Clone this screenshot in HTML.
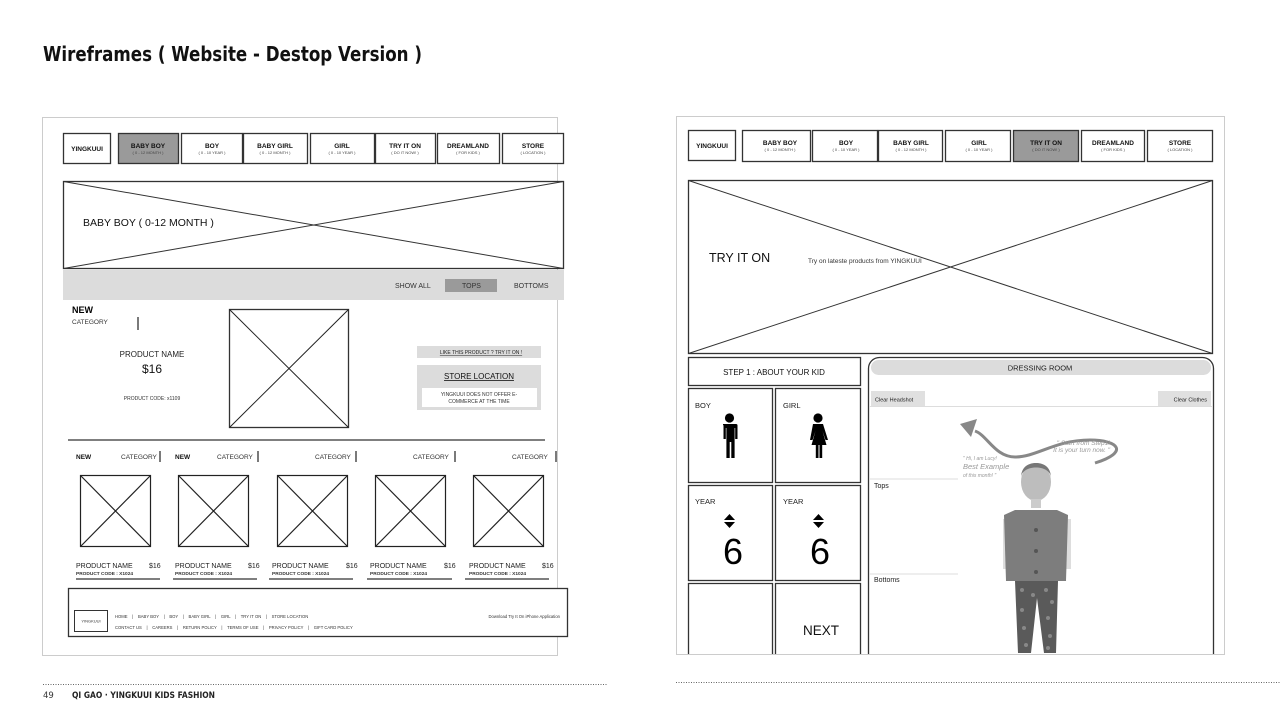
<!DOCTYPE html>
<html><head><meta charset="utf-8"><style>
html,body{margin:0;padding:0;background:#fff;width:1280px;height:720px;overflow:hidden}
svg{display:block;font-family:"Liberation Sans","DejaVu Sans",sans-serif}
.pre{white-space:pre}
</style></head><body>
<svg width="1280" height="720" viewBox="0 0 1280 720" xmlns="http://www.w3.org/2000/svg">
<text x="43" y="61" font-size="20" font-weight="bold" font-family="DejaVu Sans, sans-serif" fill="#111" textLength="379" lengthAdjust="spacingAndGlyphs">Wireframes ( Website - Destop Version )</text>

<!-- LEFT PANEL -->
<rect x="42.5" y="117.5" width="515" height="538" fill="#fff" stroke="#ccc"/>
<g stroke="#333" stroke-width="1.3" fill="#fff">
<rect x="63.5" y="133.5" width="47" height="30"/>
<rect x="118.5" y="133.5" width="60" height="30" fill="#9a9a9a"/>
<rect x="181.5" y="133.5" width="61" height="30"/>
<rect x="243.5" y="133.5" width="64" height="30"/>
<rect x="310.5" y="133.5" width="64" height="30"/>
<rect x="375.5" y="133.5" width="60" height="30"/>
<rect x="437.5" y="133.5" width="62" height="30"/>
<rect x="502.5" y="133.5" width="61" height="30"/>
</g>
<g font-size="6.5" font-weight="bold" text-anchor="middle" fill="#111">
<text x="87" y="151">YINGKUUI</text>
<text x="148" y="148">BABY BOY</text><text x="212" y="148">BOY</text><text x="275" y="148">BABY GIRL</text><text x="342" y="148">GIRL</text><text x="405" y="148">TRY IT ON</text><text x="468" y="148">DREAMLAND</text><text x="533" y="148">STORE</text>
</g>
<g font-size="4" text-anchor="middle" fill="#444">
<text x="148" y="154">( 0 - 12 MONTH )</text><text x="212" y="154">( 0 - 10 YEAR )</text><text x="275" y="154">( 0 - 12 MONTH )</text><text x="342" y="154">( 0 - 10 YEAR )</text><text x="405" y="154">( DO IT NOW! )</text><text x="468" y="154">( FOR KIDS )</text><text x="533" y="154">( LOCATION )</text>
</g>
<rect x="63.5" y="181.5" width="500" height="87" fill="#fff" stroke="#333" stroke-width="1.3"/>
<path d="M63.5 181.5L563.5 268.5M563.5 181.5L63.5 268.5" stroke="#333" stroke-width="1"/>
<text x="83" y="226" font-size="10.5" fill="#111">BABY BOY ( 0-12 MONTH )</text>
<rect x="63" y="270" width="501" height="30" fill="#dcdcdc"/>
<rect x="445" y="279" width="52" height="13" fill="#9a9a9a"/>
<g font-size="7" fill="#333"><text x="395" y="288">SHOW ALL</text><text x="462" y="288">TOPS</text><text x="514" y="288">BOTTOMS</text></g>
<text x="72" y="313" font-size="9" font-weight="bold">NEW</text>
<text x="72" y="324" font-size="6.5" fill="#333">CATEGORY</text>
<line x1="138" y1="317" x2="138" y2="330" stroke="#333" stroke-width="1.3"/>
<text x="152" y="357" font-size="8" text-anchor="middle" fill="#222">PRODUCT NAME</text>
<text x="152" y="373" font-size="12" text-anchor="middle" fill="#111">$16</text>
<text x="152" y="400" font-size="5" text-anchor="middle" fill="#333">PRODUCT CODE: x1109</text>
<rect x="229.5" y="309.5" width="119" height="118" fill="#fff" stroke="#333" stroke-width="1.3"/>
<path d="M229.5 309.5L348.5 427.5M348.5 309.5L229.5 427.5" stroke="#222"/>
<rect x="417" y="346" width="124" height="12" fill="#dcdcdc"/>
<text x="481" y="354" font-size="5" text-anchor="middle" text-decoration="underline" fill="#222">LIKE THIS PRODUCT ? TRY IT ON !</text>
<rect x="417" y="365" width="124" height="45" fill="#dcdcdc"/>
<text x="479" y="379" font-size="8" text-anchor="middle" text-decoration="underline" fill="#111">STORE LOCATION</text>
<rect x="422" y="388" width="115" height="19" fill="#fff"/>
<text x="479" y="396" font-size="5" text-anchor="middle" fill="#333">YINGKUUI DOES NOT OFFER E-</text>
<text x="479" y="403" font-size="5" text-anchor="middle" fill="#333">COMMERCE AT THE TIME</text>
<line x1="68" y1="440" x2="545" y2="440" stroke="#333" stroke-width="1.3"/>
<g font-size="6.5" fill="#333">
<text x="76" y="459" font-weight="bold" fill="#111">NEW</text><text x="121" y="459">CATEGORY</text>
<text x="175" y="459" font-weight="bold" fill="#111">NEW</text><text x="217" y="459">CATEGORY</text>
<text x="315" y="459">CATEGORY</text><text x="413" y="459">CATEGORY</text><text x="512" y="459">CATEGORY</text>
</g>
<g stroke="#333" stroke-width="1.3"><line x1="160" y1="451" x2="160" y2="462"/><line x1="258" y1="451" x2="258" y2="462"/><line x1="356" y1="451" x2="356" y2="462"/><line x1="455" y1="451" x2="455" y2="462"/><line x1="556" y1="451" x2="556" y2="462"/></g>
<g stroke="#222" stroke-width="1.2" fill="#fff">
<rect x="80.5" y="475.5" width="70" height="71"/><path d="M80.5 475.5L150.5 546.5M150.5 475.5L80.5 546.5"/>
<rect x="178.5" y="475.5" width="70" height="71"/><path d="M178.5 475.5L248.5 546.5M248.5 475.5L178.5 546.5"/>
<rect x="277.5" y="475.5" width="70" height="71"/><path d="M277.5 475.5L347.5 546.5M347.5 475.5L277.5 546.5"/>
<rect x="375.5" y="475.5" width="70" height="71"/><path d="M375.5 475.5L445.5 546.5M445.5 475.5L375.5 546.5"/>
<rect x="473.5" y="475.5" width="70" height="71"/><path d="M473.5 475.5L543.5 546.5M543.5 475.5L473.5 546.5"/>
</g>
<g font-size="7" fill="#222">
<text x="76" y="568">PRODUCT NAME</text><text x="149" y="568">$16</text>
<text x="175" y="568">PRODUCT NAME</text><text x="248" y="568">$16</text>
<text x="272" y="568">PRODUCT NAME</text><text x="346" y="568">$16</text>
<text x="370" y="568">PRODUCT NAME</text><text x="444" y="568">$16</text>
<text x="469" y="568">PRODUCT NAME</text><text x="542" y="568">$16</text>
</g>
<g font-size="4.8" font-weight="bold" fill="#333">
<text x="76" y="575">PRODUCT CODE : X1024</text><text x="175" y="575">PRODUCT CODE : X1024</text><text x="272" y="575">PRODUCT CODE : X1024</text><text x="370" y="575">PRODUCT CODE : X1024</text><text x="469" y="575">PRODUCT CODE : X1024</text>
</g>
<g stroke="#333" stroke-width="1.3"><line x1="76" y1="579" x2="160" y2="579"/><line x1="173" y1="579" x2="257" y2="579"/><line x1="269" y1="579" x2="353" y2="579"/><line x1="367" y1="579" x2="452" y2="579"/><line x1="465" y1="579" x2="549" y2="579"/></g>
<rect x="68.5" y="588.5" width="499" height="48" fill="#fff" stroke="#333" stroke-width="1.3"/>
<rect x="74.5" y="610.5" width="33" height="21" fill="#fff" stroke="#333"/>
<text x="91" y="622.5" font-size="4" text-anchor="middle" fill="#333">YINGKUUI</text>
<g font-size="4.2" fill="#333">
<text class="pre" x="115" y="618">HOME    |    BABY BOY    |    BOY    |    BABY GIRL    |    GIRL    |    TRY IT ON    |    STORE LOCATION</text>
<text class="pre" x="115" y="629">CONTACT US    |    CAREERS    |    RETURN POLICY    |    TERMS OF USE    |    PRIVACY POLICY    |    GIFT CARD POLICY</text>
<text x="560" y="618" text-anchor="end">Download Try It On iPhone Application</text>
</g>

<!-- RIGHT PANEL -->
<rect x="676.5" y="116.5" width="548" height="538" fill="#fff" stroke="#ccc"/>
<g stroke="#333" stroke-width="1.3" fill="#fff">
<rect x="688.5" y="130.5" width="47" height="30"/>
<rect x="742.5" y="130.5" width="68" height="31"/>
<rect x="812.5" y="130.5" width="65" height="31"/>
<rect x="878.5" y="130.5" width="64" height="31"/>
<rect x="945.5" y="130.5" width="65" height="31"/>
<rect x="1013.5" y="130.5" width="65" height="31" fill="#9a9a9a"/>
<rect x="1081.5" y="130.5" width="63" height="31"/>
<rect x="1147.5" y="130.5" width="65" height="31"/>
</g>
<g font-size="6.5" font-weight="bold" text-anchor="middle" fill="#111">
<text x="712" y="148">YINGKUUI</text>
<text x="780" y="145">BABY BOY</text><text x="846" y="145">BOY</text><text x="911" y="145">BABY GIRL</text><text x="979" y="145">GIRL</text><text x="1046" y="145">TRY IT ON</text><text x="1113" y="145">DREAMLAND</text><text x="1180" y="145">STORE</text>
</g>
<g font-size="4" text-anchor="middle" fill="#444">
<text x="780" y="151">( 0 - 12 MONTH )</text><text x="846" y="151">( 0 - 10 YEAR )</text><text x="911" y="151">( 0 - 12 MONTH )</text><text x="979" y="151">( 0 - 10 YEAR )</text><text x="1046" y="151">( DO IT NOW! )</text><text x="1113" y="151">( FOR KIDS )</text><text x="1180" y="151">( LOCATION )</text>
</g>
<rect x="688.5" y="180.5" width="524" height="173" fill="#fff" stroke="#333" stroke-width="1.3"/>
<path d="M688.5 180.5L1212.5 353.5M1212.5 180.5L688.5 353.5" stroke="#333"/>
<text x="709" y="262" font-size="12.5" fill="#111">TRY IT ON</text>
<text x="808" y="263" font-size="6.5" fill="#333">Try on lateste products from YINGKUUI</text>

<g stroke="#333" stroke-width="1.3" fill="#fff">
<rect x="688.5" y="357.5" width="172" height="28"/>
<rect x="688.5" y="388.5" width="84" height="94"/><rect x="775.5" y="388.5" width="85" height="94"/>
<rect x="688.5" y="485.5" width="84" height="95"/><rect x="775.5" y="485.5" width="85" height="95"/>
<path d="M688.5 654V583.5H772.5V654M775.5 654V583.5H860.5V654"/>
</g>
<text x="774" y="375" font-size="8" text-anchor="middle" fill="#111">STEP 1 : ABOUT YOUR KID</text>
<g font-size="7.5" fill="#222"><text x="695" y="408">BOY</text><text x="783" y="408">GIRL</text><text x="695" y="504">YEAR</text><text x="783" y="504">YEAR</text></g>
<g fill="#000">
<circle cx="729.5" cy="418" r="4.6"/>
<path d="M723 424h13a1.5 1.5 0 0 1 1.5 1.5V439h-2.3v-11h-.6v30h-3.3v-16h-1.6v16h-3.3v-30h-.6v11h-2.3V425.5A1.5 1.5 0 0 1 723 424z"/>
<circle cx="818" cy="418" r="4.6"/>
<path d="M813 424h10l5 16h-2.5l-3-9 4 14h-4.3v13h-2.7v-13h-1v13h-2.7v-13h-4.3l4-14-3 9h-2.5z"/>
<path d="M724 520l5.5-6 5.5 6zM724 522h11l-5.5 6z"/>
<path d="M813 520l5.5-6 5.5 6zM813 522h11l-5.5 6z"/>
</g>
<text x="733" y="564" font-size="36" text-anchor="middle" fill="#000">6</text>
<text x="820" y="564" font-size="36" text-anchor="middle" fill="#000">6</text>
<text x="821" y="635" font-size="13.5" text-anchor="middle" fill="#111">NEXT</text>

<path d="M868.5 654V368.5a11 11 0 0 1 11-11h323a11 11 0 0 1 11 11V654" fill="#fff" stroke="#333" stroke-width="1.3"/>
<rect x="871" y="360" width="340" height="15" rx="7.5" fill="#dcdcdc"/>
<text x="1040" y="370.5" font-size="7.5" text-anchor="middle" fill="#222">DRESSING ROOM</text>
<rect x="871" y="391" width="54" height="15" fill="#e0e0e0"/>
<rect x="1158" y="391" width="53" height="15" fill="#e0e0e0"/>
<line x1="869" y1="406.5" x2="1212" y2="406.5" stroke="#ddd"/>
<text x="875" y="401.5" font-size="5.5" fill="#222">Clear Headshot</text>
<text x="1207" y="401.5" font-size="5.5" text-anchor="end" fill="#222">Clear Clothes</text>
<line x1="869" y1="479" x2="958" y2="479" stroke="#ddd"/>
<line x1="869" y1="574" x2="958" y2="574" stroke="#ddd"/>
<text x="874" y="488" font-size="7" fill="#222">Tops</text>
<text x="874" y="582" font-size="7" fill="#222">Bottoms</text>
<path d="M975 431c12 4 20 26 40 26c22 0 40-17 75-17c28 0 40 12 5 23" fill="none" stroke="#888" stroke-width="3"/>
<path d="M960 424l17-5-6 18z" fill="#888"/>
<g font-style="italic" fill="#999">
<text x="1110" y="445" font-size="6.5" text-anchor="end">" Start from Step1!</text>
<text x="1110" y="452" font-size="6.5" text-anchor="end">It is your turn now. "</text>
<text x="963" y="460" font-size="5">" Hi, I am Lucy!</text>
<text x="963" y="469" font-size="7.5">Best Example</text>
<text x="963" y="477" font-size="5">of this month! "</text>
</g>
<rect x="1003" y="519" width="5" height="50" fill="#ddd"/>
<rect x="1066" y="519" width="5" height="50" fill="#ddd"/>
<ellipse cx="1036" cy="482" rx="15" ry="19" fill="#bdbdbd"/>
<path d="M1021 478c0-14 30-14 30 0c0-10-6-15-15-15s-15 5-15 15z" fill="#777"/>
<rect x="1031" y="499" width="10" height="9" fill="#ccc"/>
<path d="M1015 510h42l11 5-2 66h-60l-2-66z" fill="#7d7d7d"/>
<g fill="#555"><circle cx="1036" cy="530" r="2"/><circle cx="1036" cy="551" r="2"/><circle cx="1036" cy="572" r="2"/></g>
<path d="M1015 581h43l-2 72h-12l-7-55-6 55h-13z" fill="#5a5a5a"/>
<g fill="#888"><circle cx="1022" cy="590" r="2"/><circle cx="1033" cy="595" r="2"/><circle cx="1046" cy="590" r="2"/><circle cx="1052" cy="602" r="2"/><circle cx="1022" cy="610" r="2"/><circle cx="1048" cy="618" r="2"/><circle cx="1024" cy="628" r="2"/><circle cx="1050" cy="636" r="2"/><circle cx="1026" cy="645" r="2"/><circle cx="1048" cy="648" r="2"/></g>

<line x1="43" y1="684.5" x2="607" y2="684.5" stroke="#666" stroke-dasharray="1 1.5"/>
<line x1="676" y1="682.5" x2="1280" y2="682.5" stroke="#666" stroke-dasharray="1 1.5"/>
<text x="43" y="698" font-size="8.5" font-family="DejaVu Sans, sans-serif" fill="#333">49</text>
<text x="72" y="698" font-size="8.5" font-weight="bold" font-family="DejaVu Sans, sans-serif" fill="#222" textLength="143" lengthAdjust="spacingAndGlyphs">QI GAO · YINGKUUI KIDS FASHION</text>
</svg>
</body></html>
